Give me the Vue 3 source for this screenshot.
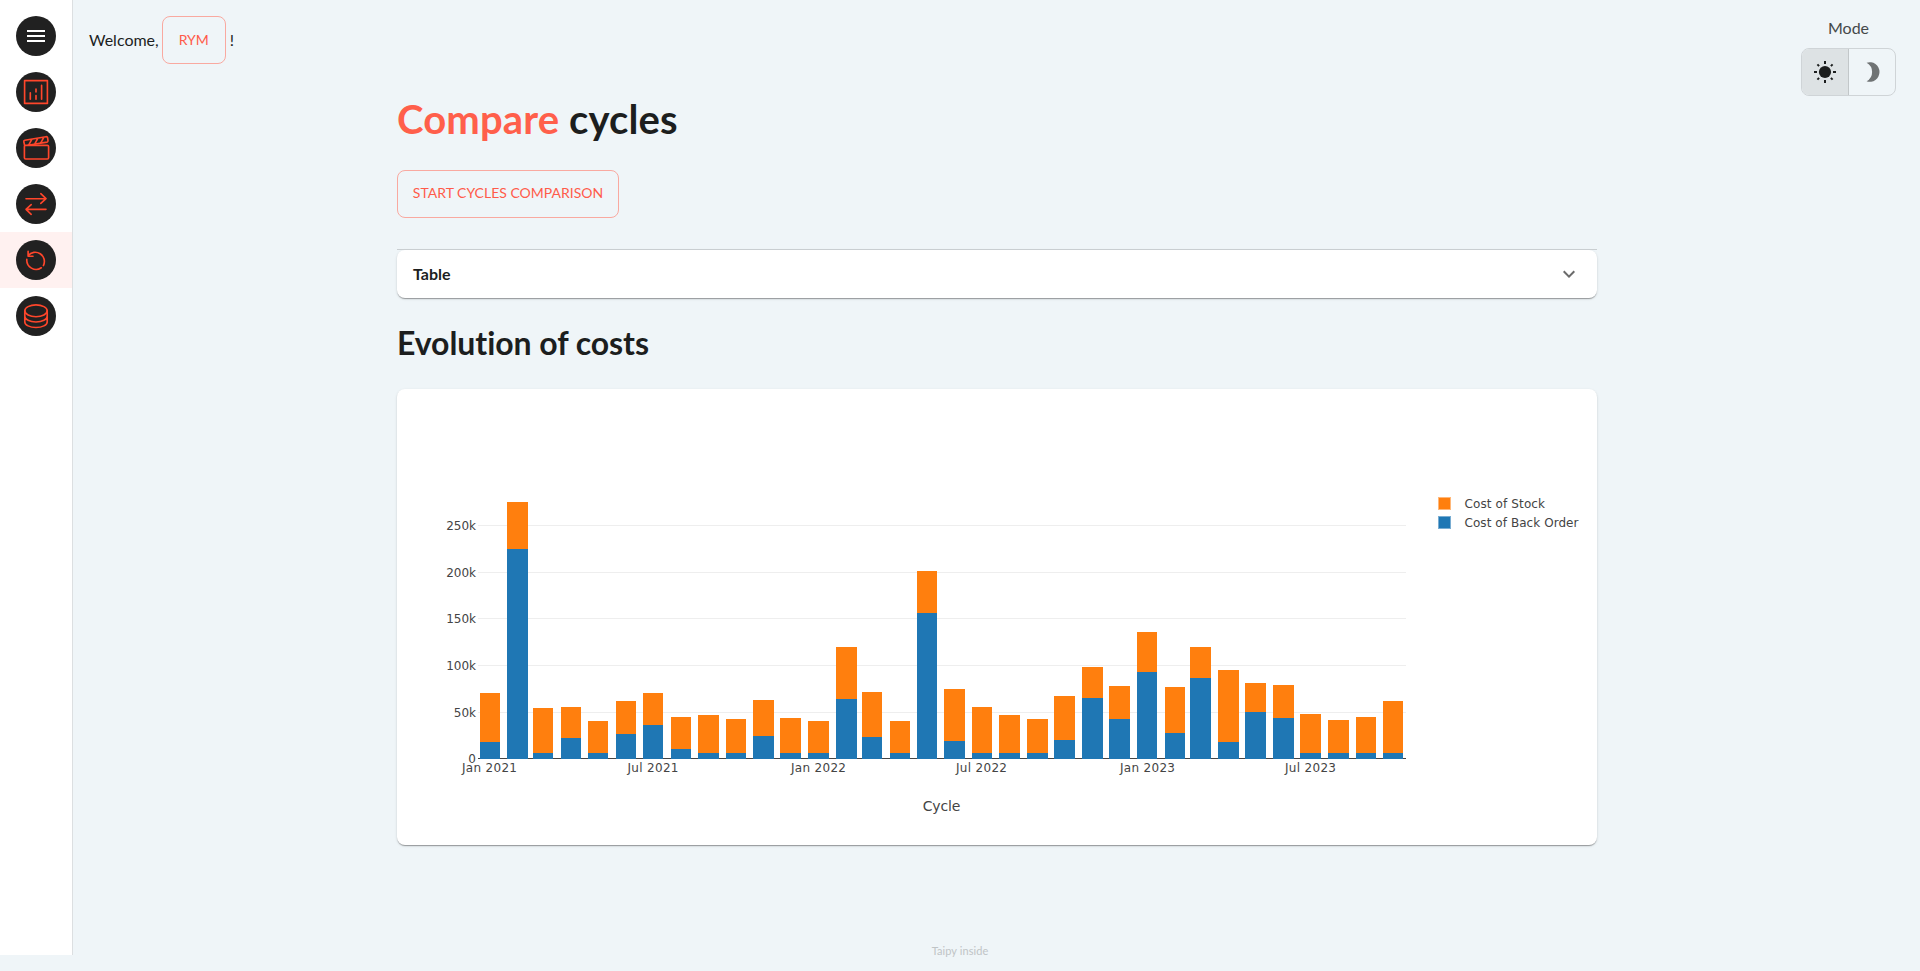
<script setup>
const BASE = 759
// [x, width, top of stack, boundary between the two series]
const bars = [
  [480, 20, 693, 742], [507, 21, 502, 549], [533, 20, 708, 753], [561, 20, 707, 738],
  [588, 20, 721, 753], [616, 20, 701, 734], [643, 20, 693, 725], [671, 20, 717, 749],
  [698, 21, 715, 753], [726, 20, 719, 753], [753, 21, 700, 736], [780, 21, 718, 753],
  [808, 21, 721, 753], [836, 21, 647, 699], [862, 20, 692, 737], [890, 20, 721, 753],
  [917, 20, 571, 613], [944, 21, 689, 741], [972, 20, 707, 753], [999, 21, 715, 753],
  [1027, 21, 719, 753], [1054, 21, 696, 740], [1082, 21, 667, 698], [1109, 21, 686, 719],
  [1137, 20, 632, 672], [1165, 20, 687, 733], [1190, 21, 647, 678], [1218, 21, 670, 742],
  [1245, 21, 683, 712], [1273, 21, 685, 718], [1300, 21, 714, 753], [1328, 21, 720, 753],
  [1356, 20, 717, 753], [1383, 20, 701, 753],
]
const yTicks = [
  ['250k', 525], ['200k', 572], ['150k', 618], ['100k', 665], ['50k', 712], ['0', 758],
]
const xTicks = [
  ['Jan 2021', 489.5, 55], ['Jul 2021', 653, 51], ['Jan 2022', 818.5, 55],
  ['Jul 2022', 981.5, 51], ['Jan 2023', 1147.5, 55], ['Jul 2023', 1310.5, 51],
]
</script>

<template>
  <div class="page">
    <nav class="side">
      <a class="item">
        <span class="disc">
          <svg viewBox="0 0 40 40"><path d="M11 15h18M11 20h18M11 25h18" stroke="#fff" stroke-width="2" /></svg>
        </span>
      </a>
      <a class="item">
        <span class="disc">
          <svg viewBox="0 0 40 40" class="line">
            <rect x="8.6" y="8.6" width="22.8" height="22.8" />
            <path d="M14.3 20.7v6.5M20 17v3M20 23.6v3.6M25.6 13.4v13.8" />
          </svg>
        </span>
      </a>
      <a class="item">
        <span class="disc">
          <svg viewBox="0 0 40 40" class="line">
            <rect x="8.4" y="17.4" width="24.2" height="13.6" rx="1.2" />
            <path d="M8.6 17.2L7.8 13.8Q7.6 12.6 8.8 12.3L30 8.7Q31.3 8.5 31.6 9.8L32 12.6Q32.1 13.8 31 14.1L12 17.2M15.8 11.4L12.8 16.8M21.8 10.4L18.8 15.8M27.8 9.4L24.8 14.8" />
          </svg>
        </span>
      </a>
      <a class="item">
        <span class="disc">
          <svg viewBox="0 0 40 40" class="line">
            <path d="M10 14.7H30M24.8 9.7L30 14.7L24.8 19.4M30 25.3H10M15.2 20.6L10 25.3L15.2 30.3" />
          </svg>
        </span>
      </a>
      <a class="item active">
        <span class="disc">
          <svg viewBox="0 0 40 40" class="line">
            <path d="M12.1 11.3V16.2H17M12.1 15.6A9.2 9.2 0 0 1 27.4 25.6M10.8 19.4A9.3 9.3 0 0 0 25.3 27.8" />
          </svg>
        </span>
      </a>
      <a class="item">
        <span class="disc">
          <svg viewBox="0 0 40 40" class="line">
            <ellipse cx="20" cy="14.8" rx="11.2" ry="5.9" />
            <path d="M8.8 14.8V26C8.8 29 13.8 31.5 20 31.5S31.2 29 31.2 26V14.8M8.8 20.3C8.8 23.5 13.8 26 20 26S31.2 23.5 31.2 20.3" />
          </svg>
        </span>
      </a>
    </nav>

    <header class="top">
      <div class="welcome">
        <span>Welcome,</span><button class="btn rym">RYM</button><span>!</span>
      </div>
      <div class="mode">
        <div class="mode-label">Mode</div>
        <div class="toggle">
          <span class="opt on">
            <svg viewBox="0 0 24 24" width="24" height="24">
              <circle cx="12" cy="12" r="6.1" fill="#1c1e1e" />
              <path d="M12 1v3M12 20v3M1 12h3M20 12h3M4.4 4.4l1.7 1.7M17.9 17.9l1.7 1.7M4.4 19.6l1.7-1.7M17.9 6.1l1.7-1.7" stroke="#1c1e1e" stroke-width="2" />
            </svg>
          </span>
          <span class="opt">
            <svg viewBox="0 0 24 24" width="24" height="24">
              <path d="M6.6 2.7A9.8 9.8 0 1 1 6.6 21.3A10.6 10.6 0 0 0 6.6 2.7Z" fill="#6f7374" />
            </svg>
          </span>
        </div>
      </div>
    </header>

    <main class="content">
      <h1><span class="accent">Compare</span> cycles</h1>
      <button class="btn start">START CYCLES COMPARISON</button>
      <section class="panel">
        <span class="panel-title">Table</span>
        <svg viewBox="0 0 24 24" width="24" height="24"><path d="M16.59 8.59 12 13.17 7.41 8.59 6 10l6 6 6-6z" fill="#6b6b6b" /></svg>
      </section>
      <h2>Evolution of costs</h2>
      <section class="card">
        <svg class="chart" width="1200" height="456" viewBox="397 389 1200 456">
          <g shape-rendering="crispEdges">
            <rect v-for="t in yTicks.slice(0, 5)" :key="t[0]" x="478" :y="t[1]" width="928" height="1" fill="#eee" />
            <rect x="478" y="758" width="928" height="1" fill="#444" />
            <g v-for="b in bars" :key="b[0]">
              <rect :x="b[0]" :y="b[2]" :width="b[1]" :height="b[3] - b[2]" fill="#ff7f0e" />
              <rect :x="b[0]" :y="b[3]" :width="b[1]" :height="BASE - b[3]" fill="#1f77b4" />
            </g>
          </g>
          <g class="tick">
            <text v-for="t in yTicks" :key="t[0]" x="476" :y="t[1] + 5" text-anchor="end">{{ t[0] }}</text>
            <text v-for="t in xTicks" :key="t[0]" :x="t[1]" y="772" :textLength="t[2]" text-anchor="middle">{{ t[0] }}</text>
            <text x="1464.5" y="508" textLength="80.5">Cost of Stock</text>
            <text x="1464.5" y="527" textLength="114">Cost of Back Order</text>
          </g>
          <text class="axis" x="941.5" y="811" text-anchor="middle" textLength="37.5">Cycle</text>
          <rect x="1438.5" y="497.5" width="12" height="12" fill="#ff7f0e" stroke="#ffb87a" />
          <rect x="1438.5" y="516.5" width="12" height="12" fill="#1f77b4" stroke="#79add2" />
        </svg>
      </section>
    </main>
    <footer class="foot">Taipy inside</footer>
  </div>
</template>

<style>
body {
  background: #eff5f8;
  overflow: hidden;
}
</style>

<style scoped>
.page {
  display: grid;
  grid-template-columns: 73px 1fr;
  grid-template-rows: 96px 859px 16px;
  height: 971px;
  font-family: Lato, sans-serif;
  font-size: 16px;
  color: #1c1e1e;
  position: relative;
}
.side {
  grid-row: 1 / 3;
  background: #fff;
  border-right: 1px solid #dcdfe1;
  padding-top: 8px;
  box-sizing: border-box;
}
.item {
  display: flex;
  height: 56px;
  align-items: center;
  justify-content: center;
}
.active {
  background: #fff1f0;
}
.disc {
  width: 40px;
  height: 40px;
  border-radius: 50%;
  background: #212121;
}
.disc svg {
  display: block;
}
.line {
  fill: none;
  stroke: #ff462b;
  stroke-width: 1.65;
  stroke-linecap: round;
  stroke-linejoin: round;
}
.top {
  display: flex;
  justify-content: space-between;
  padding: 16px 24px 0 16px;
}
.welcome {
  display: flex;
  height: 48px;
  align-items: center;
}
.welcome span {
  padding-bottom: 2px;
}
.btn {
  box-sizing: border-box;
  height: 48px;
  border: 1px solid #f9a9a0;
  border-radius: 8px;
  background: none;
  font: 14px/24px Lato, sans-serif;
  color: #ff5b4a;
  padding: 0 0 2px;
}
.rym {
  width: 64px;
  margin: 0 4px 0 3px;
  padding: 0;
}
.mode {
  width: 95px;
}
.mode-label {
  text-align: center;
  line-height: 24px;
  color: #45494a;
  height: 32px;
}
.toggle {
  display: flex;
  box-sizing: border-box;
  height: 48px;
  border: 1px solid #cfd4d7;
  border-radius: 8px;
  overflow: hidden;
}
.opt {
  flex: 1;
  display: flex;
  align-items: center;
  justify-content: center;
}
.on {
  background: #dde2e4;
  border-right: 1px solid #c2c7c9;
}
.content {
  width: 1200px;
  margin-left: 324px;
}
h1 {
  margin: -1px 0 0;
  font-size: 40px;
  line-height: 48px;
  font-weight: 700;
  letter-spacing: 0.13px;
}
.accent {
  color: #ff5f4b;
}
.start {
  display: block;
  width: 222px;
  margin-top: 27px;
}
.panel {
  display: flex;
  align-items: center;
  justify-content: space-between;
  box-sizing: border-box;
  height: 48px;
  margin-top: 32px;
  padding: 0 16px;
  background: #fff;
  border-radius: 8px;
  font-weight: 700;
  box-shadow: 0 2px 1px -1px rgba(0, 0, 0, 0.2), 0 1px 1px rgba(0, 0, 0, 0.14), 0 1px 3px rgba(0, 0, 0, 0.12);
  position: relative;
}
.panel-title {
  padding-bottom: 2px;
}
.panel::before {
  content: "";
  position: absolute;
  left: 0;
  right: 0;
  top: -1px;
  height: 1px;
  background: #c9ced1;
}
h2 {
  margin: 25px 0 0;
  font-size: 32px;
  line-height: 40px;
  font-weight: 700;
  font-variant-ligatures: none;
  letter-spacing: -0.06px;
}
.card {
  margin-top: 26px;
  height: 456px;
  background: #fff;
  border-radius: 8px;
  box-shadow: 0 2px 1px -1px rgba(0, 0, 0, 0.2), 0 1px 1px rgba(0, 0, 0, 0.14), 0 1px 3px rgba(0, 0, 0, 0.12);
}
.chart {
  display: block;
}
.tick {
  font: 12px "DejaVu Sans", sans-serif;
  fill: #444;
}
.axis {
  font: 14px "DejaVu Sans", sans-serif;
  fill: #444;
}
.foot {
  position: absolute;
  left: 0;
  right: 0;
  bottom: 12px;
  text-align: center;
  font-size: 11px;
  line-height: 16px;
  letter-spacing: 0.08px;
  color: #bfc4c6;
}
</style>
